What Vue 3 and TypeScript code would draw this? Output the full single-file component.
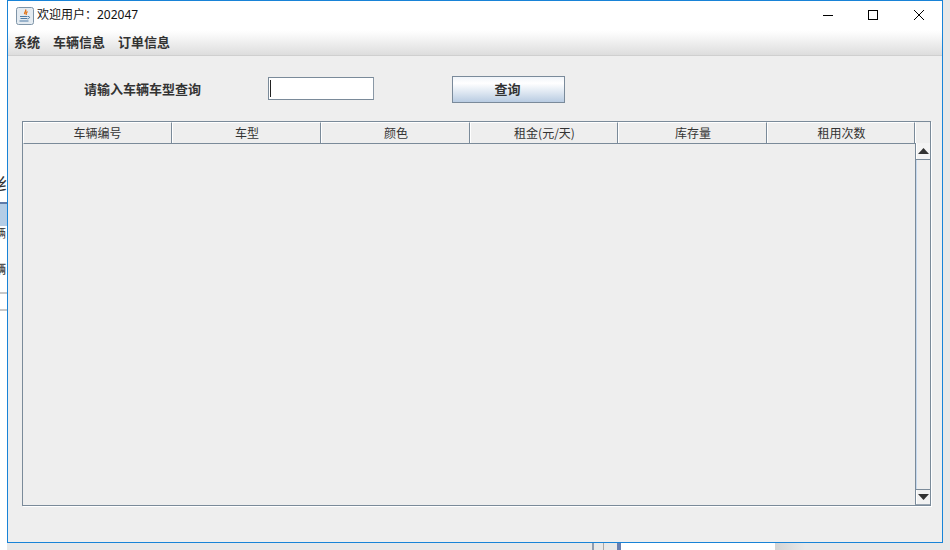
<script setup lang="ts">
const columns: string[] = ['车辆编号', '车型', '颜色', '租金(元/天)', '库存量', '租用次数']
const menus: string[] = ['系统', '车辆信息', '订单信息']
</script>

<template>
  <div class="desktop">
    <div class="behind behind-glyph">纟</div>
    <div class="behind behind-tab"></div>
    <div class="behind behind-text1">辆</div>
    <div class="behind behind-text2">辆</div>
    <div class="behind behind-line1"></div>
    <div class="behind behind-line2"></div>
    <div class="behind behind-b1"></div>
    <div class="behind behind-b2"></div>
    <div class="behind behind-b3"></div>
    <div class="behind behind-paper"></div>
    <div class="behind behind-shade"></div>

    <section class="window">
      <header class="titlebar">
        <svg class="java" width="18" height="18" viewBox="0 0 18 18">
          <rect x="0.5" y="0.5" width="17" height="17" rx="2" fill="#e4ebf1" stroke="#7f95a8" />
          <path d="M9.5 2.5c1.5 1.6-1.8 2.8-.8 4.6M11.5 4.5c-1.2 1-2 1.6-1.2 3.5" fill="none" stroke="#e2761c" stroke-width="1.4" />
          <path d="M4 9.5h7.5M4.5 11.5h6.5M3.5 14h9" fill="none" stroke="#4d7ba6" stroke-width="1.1" />
          <path d="M12 9.5c2.2-.4 2.2 2-.6 2.4" fill="none" stroke="#4d7ba6" />
        </svg>
        <span class="title">欢迎用户：202047</span>
        <div class="controls">
          <svg width="12" height="12" viewBox="0 0 12 12"><path d="M1 6.5h10" stroke="#000" /></svg>
          <svg width="12" height="12" viewBox="0 0 12 12"><rect x="1.5" y="1.5" width="9" height="9" fill="none" stroke="#000" /></svg>
          <svg class="close" width="12" height="12" viewBox="0 0 12 12"><path d="M1 1l10 10M11 1L1 11" stroke="#000" /></svg>
        </div>
      </header>

      <nav class="menubar">
        <span v-for="m in menus" :key="m" class="menu">{{ m }}</span>
      </nav>

      <main class="content">
        <div class="query">
          <label class="label">请输入车辆车型查询</label>
          <div class="input"><i class="caret"></i></div>
          <button class="btn">查询</button>
        </div>

        <div class="table">
          <div class="main-col">
            <div class="thead">
              <div v-for="c in columns" :key="c" class="th">{{ c }}</div>
            </div>
            <div class="tbody"></div>
          </div>
          <div class="scroll">
            <div class="corner"></div>
            <div class="arrow up"><svg width="11" height="6" viewBox="0 0 11 6"><path d="M5.5 0L11 6H0z" fill="#333" /></svg></div>
            <div class="track"></div>
            <div class="arrow down"><svg width="11" height="6" viewBox="0 0 11 6"><path d="M0 0h11L5.5 6z" fill="#333" /></svg></div>
          </div>
        </div>
      </main>
    </section>
  </div>
</template>

<style>
html, body { margin: 0; padding: 0; background: #e8e8e8; overflow: hidden; }
</style>

<style scoped>
.desktop {
  position: relative;
  width: 950px;
  height: 550px;
  overflow: hidden;
  background: linear-gradient(to right, #ffffff 0, #ffffff 7px, #e8e8e8 7px);
  font-family: "Noto Sans CJK SC", "Liberation Sans", sans-serif;
}
.behind { position: absolute; }
.behind-glyph { left: -3px; top: 172px; font-size: 18px; line-height: 22px; color: #333; }
.behind-tab { left: 0; top: 202px; width: 7px; height: 24px; background: #b4cde6; border-top: 2px solid #5f7ba8; box-sizing: border-box; }
.behind-text1 { left: -6px; top: 225px; font-size: 12px; line-height: 16px; color: #333; }
.behind-text2 { left: -6px; top: 261px; font-size: 12px; line-height: 16px; font-weight: 700; color: #555; }
.behind-line1 { left: 0; top: 292px; width: 7px; height: 2px; background: #c8c8c8; }
.behind-line2 { left: 0; top: 309px; width: 7px; height: 2px; background: #c8c8c8; }
.behind-b1 { left: 592px; top: 543px; width: 2px; height: 7px; background: #8c9cb0; }
.behind-b2 { left: 603px; top: 543px; width: 1px; height: 7px; background: #a8a8a8; }
.behind-b3 { left: 617px; top: 543px; width: 4px; height: 7px; background: #6880b0; }
.behind-paper { left: 621px; top: 543px; width: 154px; height: 7px; background: #ffffff; }
.behind-shade { left: 775px; top: 543px; width: 30px; height: 7px; background: linear-gradient(to right, #d4d4d4, #e8e8e8); }

.window {
  position: absolute;
  left: 7px;
  top: 0;
  width: 936px;
  height: 543px;
  box-sizing: border-box;
  border: 1px solid #1883d7;
  background: #eeeeee;
  display: flex;
  flex-direction: column;
}
.titlebar {
  height: 29px;
  flex: none;
  background: #fff;
  display: flex;
  align-items: center;
  box-sizing: border-box;
  padding: 0 0 0 8px;
}
.java { flex: none; }
.title {
  margin-left: 3px;
  padding-bottom: 2px;
  font-family: "Noto Sans", "Noto Sans CJK SC", sans-serif;
  font-size: 12px;
  color: #111;
  line-height: 16px;
}
.controls {
  margin-left: auto;
  display: flex;
  gap: 33px;
  padding: 0 17px 2px 0;
}
.controls svg { display: block; }
.controls .close { margin-left: 1px; }
.menubar {
  height: 26px;
  flex: none;
  box-sizing: border-box;
  background: linear-gradient(to bottom, #ffffff 0, #fbfbfb 15%, #dddddd 100%);
  border-bottom: 1px solid #cfcfcf;
  display: flex;
  gap: 13px;
  align-items: center;
  padding: 0 0 2px 6px;
}
.menu { font-size: 13px; font-weight: 700; color: #333; line-height: 18px; }
.content {
  flex: 1;
  display: flex;
  flex-direction: column;
  padding: 20px 11px 36px 14px;
  min-height: 0;
}
.query {
  height: 45px;
  flex: none;
  display: flex;
  align-items: flex-start;
}
.label {
  flex: none;
  width: 246px;
  box-sizing: border-box;
  padding-left: 62px;
  margin-top: 4px;
  font-size: 13px;
  font-weight: 700;
  line-height: 18px;
  color: #333;
  white-space: nowrap;
}
.input {
  flex: none;
  width: 106px;
  height: 23px;
  margin-top: 1px;
  box-sizing: border-box;
  background: #fff;
  border: 1px solid #7a8a99;
  border-right-color: #8a98a6;
  display: flex;
  align-items: center;
  padding-left: 1px;
}
.caret { width: 1px; height: 17px; background: #222; }
.btn {
  flex: none;
  margin-left: 78px;
  width: 113px;
  height: 27px;
  box-sizing: border-box;
  border: 1px solid #7a8a9a;
  background: linear-gradient(to bottom, #f0f4f9 0, #ffffff 25%, #dfe8f2 60%, #b9cce2 100%);
  font-family: inherit;
  font-size: 13px;
  font-weight: 700;
  color: #333;
  padding: 0 2px 3px 0;
}
.table {
  flex: 1;
  min-height: 0;
  display: flex;
  box-sizing: border-box;
  border: 1px solid #7a8a99;
  box-shadow: 1px 1px 0 #fff;
}
.main-col { width: 892px; flex: none; display: flex; flex-direction: column; }
.thead {
  height: 22px;
  flex: none;
  display: grid;
  grid-template-columns: 148px 149px 149px 148px 149px 148px;
  border-bottom: 1px solid #7a8a99;
  box-sizing: border-box;
  border-left: 1px solid #fff;
}
.th {
  border-right: 1px solid #7a8a99;
  border-top: 1px solid #fff;
  box-shadow: 1px 0 0 #fff;
  font-size: 12px;
  line-height: 19px;
  text-align: center;
  color: #333;
  box-sizing: border-box;
  padding-left: 2px;
}
.th:first-child { padding-left: 0; }
.tbody { flex: 1; }
.scroll { flex: 1; display: flex; flex-direction: column; }
.corner { height: 21px; flex: none; }
.arrow {
  height: 16px;
  flex: none;
  box-sizing: border-box;
  display: flex;
  align-items: center;
  justify-content: center;
  background: #f2f2f2;
  border-left: 1px solid #7a8a99;
  box-shadow: inset 1px 0 0 #fff;
}
.arrow.up { height: 17px; border-bottom: 1px solid #7a8a99; background: #f4f4f4; }
.arrow.down { border-top: 1px solid #7a8a99; border-bottom: 1px solid #9aa6b2; }
.track {
  flex: 1;
  background: #eeeeee;
  border-left: 1px solid #7a8a99;
  box-shadow: inset 1px 0 0 #c5d8ee;
}
</style>
